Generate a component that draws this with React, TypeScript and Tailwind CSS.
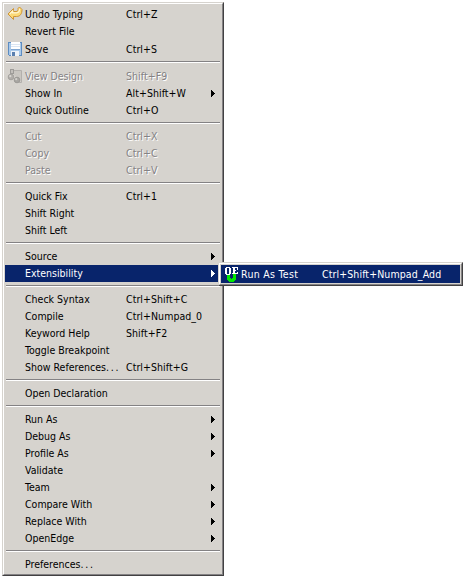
import React from 'react';

type Entry = {
  label: string;
  keys?: string;
  icon?: 'undo' | 'save' | 'design';
  sub?: boolean;
  disabled?: boolean;
  active?: boolean;
  more?: boolean;
};

const groups: Entry[][] = [
  [
    { label: 'Undo Typing', keys: 'Ctrl+Z', icon: 'undo' },
    { label: 'Revert File' },
    { label: 'Save', keys: 'Ctrl+S', icon: 'save' },
  ],
  [
    { label: 'View Design', keys: 'Shift+F9', icon: 'design', disabled: true },
    { label: 'Show In', keys: 'Alt+Shift+W', sub: true },
    { label: 'Quick Outline', keys: 'Ctrl+O' },
  ],
  [
    { label: 'Cut', keys: 'Ctrl+X', disabled: true },
    { label: 'Copy', keys: 'Ctrl+C', disabled: true },
    { label: 'Paste', keys: 'Ctrl+V', disabled: true },
  ],
  [{ label: 'Quick Fix', keys: 'Ctrl+1' }, { label: 'Shift Right' }, { label: 'Shift Left' }],
  [
    { label: 'Source', sub: true },
    { label: 'Extensibility', sub: true, active: true },
  ],
  [
    { label: 'Check Syntax', keys: 'Ctrl+Shift+C' },
    { label: 'Compile', keys: 'Ctrl+Numpad_0' },
    { label: 'Keyword Help', keys: 'Shift+F2' },
    { label: 'Toggle Breakpoint' },
    { label: 'Show References', keys: 'Ctrl+Shift+G', more: true },
  ],
  [{ label: 'Open Declaration' }],
  [
    { label: 'Run As', sub: true },
    { label: 'Debug As', sub: true },
    { label: 'Profile As', sub: true },
    { label: 'Validate' },
    { label: 'Team', sub: true },
    { label: 'Compare With', sub: true },
    { label: 'Replace With', sub: true },
    { label: 'OpenEdge', sub: true },
  ],
  [{ label: 'Preferences', more: true }],
];

function UndoIcon() {
  return (
    <svg width="16" height="16" viewBox="0 0 16 16">
      <path d="M6.5 2.5 L1 8 L6.5 13.5 V10.5 H9.5 C13 10.5 15 8 15 3.5 L12.5 1 L11 2.5 C11.5 4.5 10.5 5.5 9 5.5 H6.5 Z" fill="#fbd976" stroke="#cf9434" />
      <path d="M2.8 8 L5.6 5.2 V6.9 H9.5 C11.5 6.8 12.6 5 12.5 2.8" fill="none" stroke="#fff6d2" strokeWidth="1.2" />
    </svg>
  );
}

function SaveIcon() {
  return (
    <svg width="16" height="16" viewBox="0 0 16 16" shapeRendering="crispEdges">
      <path d="M1 1H15V15H2L1 14Z" fill="#a9c9ea" />
      <path d="M1.5 1.5H14.5V14.5H2.5L1.5 13.5Z" fill="none" stroke="#5c8cc2" />
      <rect x="4" y="1" width="9" height="7" fill="#ffffff" />
      <rect x="4" y="3" width="9" height="1" fill="#dbe6f3" />
      <rect x="4" y="5" width="9" height="1" fill="#dbe6f3" />
      <rect x="4" y="8" width="9" height="1" fill="#7fa6d2" />
      <rect x="4" y="10" width="8" height="5" fill="#edf2f8" />
      <rect x="5" y="11" width="3" height="4" fill="#5a7fae" />
    </svg>
  );
}

function DesignIcon() {
  return (
    <svg width="16" height="16" viewBox="0 0 16 16">
      <path d="M6 2.5H14.5V14.5H12" fill="none" stroke="#b3b0ac" />
      <path d="M7 3H14V14L7 7Z" fill="#c9c6c1" />
      <rect x="3.5" y="1.5" width="3" height="4" fill="#c2bfbb" stroke="#9d9b98" />
      <circle cx="4" cy="9" r="2.8" fill="#b0ada9" stroke="#a3a19d" />
      <circle cx="10" cy="12" r="2.8" fill="#a8a6a2" stroke="#9b9996" />
      <circle cx="3.3" cy="8.2" r="1.1" fill="#dad7d3" />
      <circle cx="9.2" cy="11.2" r="1.1" fill="#d3d0cc" />
    </svg>
  );
}

function TestIcon() {
  return (
    <svg width="16" height="16" viewBox="0 0 16 16" shapeRendering="crispEdges">
      <path d="M3 7h3v5h1v1h1v-1h1v-5h3v7h-1v1h-1v1h-5v-1h-1v-1h-1z" fill="#00e800" />
      <path d="M2 1h4v1h1v6h-1v1h-4v-1h-1v-6h1zM3 2v6h2v-6z" fill="#fff" fillRule="evenodd" />
      <rect x="3" y="2" width="2" height="6" fill="#08246b" />
      <path d="M8 1h6v3h-1v-2h-2v2h1v1h-1v2h2v-1h1v2h-6v-1h1v-5h-1z" fill="#fff" />
    </svg>
  );
}

function Arrow() {
  return (
    <svg className="mr-[6px] ml-auto" width="4" height="7" viewBox="0 0 4 7" shapeRendering="crispEdges">
      <path d="M0 0h1v1h1v1h1v1h1v1h-1v1h-1v1h-1v1h-1z" fill="currentColor" />
    </svg>
  );
}

function Row({ e }: { e: Entry }) {
  const tone = e.active
    ? 'bg-[#08246b] text-white'
    : e.disabled
      ? 'text-[#848284] [text-shadow:1px_1px_0_#fff]'
      : 'text-black';
  return (
    <div className={`flex items-center whitespace-pre ${e.icon ? 'h-[18px]' : 'h-[17px]'} ${tone}`}>
      <span className="flex w-5 shrink-0 items-center pl-[2px]">
        {e.icon === 'undo' && <UndoIcon />}
        {e.icon === 'save' && <SaveIcon />}
        {e.icon === 'design' && <DesignIcon />}
      </span>
      <span className="w-[101px] shrink-0">
        {e.label}
        {e.more && <span className="tracking-[1.8px]">...</span>}
      </span>
      <span className="tracking-[0.05px]">{e.keys}</span>
      {e.sub && <Arrow />}
    </div>
  );
}

const frame =
  'border border-t-[#d6d3ce] border-l-[#d6d3ce] border-r-[#424142] border-b-[#424142]';
const bevel =
  'border border-t-white border-l-white border-r-[#848284] border-b-[#848284] bg-[#d6d3ce] p-px';

export default function App() {
  return (
    <div className="relative h-[578px] w-[465px] overflow-hidden bg-white pt-[2px] pl-[2px] font-['DejaVu_Sans_Condensed','DejaVu_Sans',sans-serif] text-[10.5px] leading-[17px] [font-stretch:condensed]">
      <div className={`w-[222px] ${frame}`}>
        <div className={bevel}>
          {groups.map((g, i) => (
            <React.Fragment key={i}>
              {i > 0 && (
                <div className="h-[9px] px-px pt-[3px]">
                  <div className="h-[2px] border-t border-b border-t-[#848284] border-b-white" />
                </div>
              )}
              {g.map((e) => (
                <Row key={e.label} e={e} />
              ))}
            </React.Fragment>
          ))}
        </div>
      </div>
      <div className={`absolute top-[262px] left-[218px] w-[245px] ${frame}`}>
        <div className={bevel}>
          <div className="flex h-[18px] items-center bg-[#08246b] whitespace-pre text-white">
            <span className="w-5 shrink-0 pl-[3px]">
              <TestIcon />
            </span>
            <span className="w-[81px] shrink-0 tracking-[0.3px]">Run As Test</span>
            <span className="tracking-[0.1px]">Ctrl+Shift+Numpad_Add</span>
          </div>
        </div>
      </div>
    </div>
  );
}
